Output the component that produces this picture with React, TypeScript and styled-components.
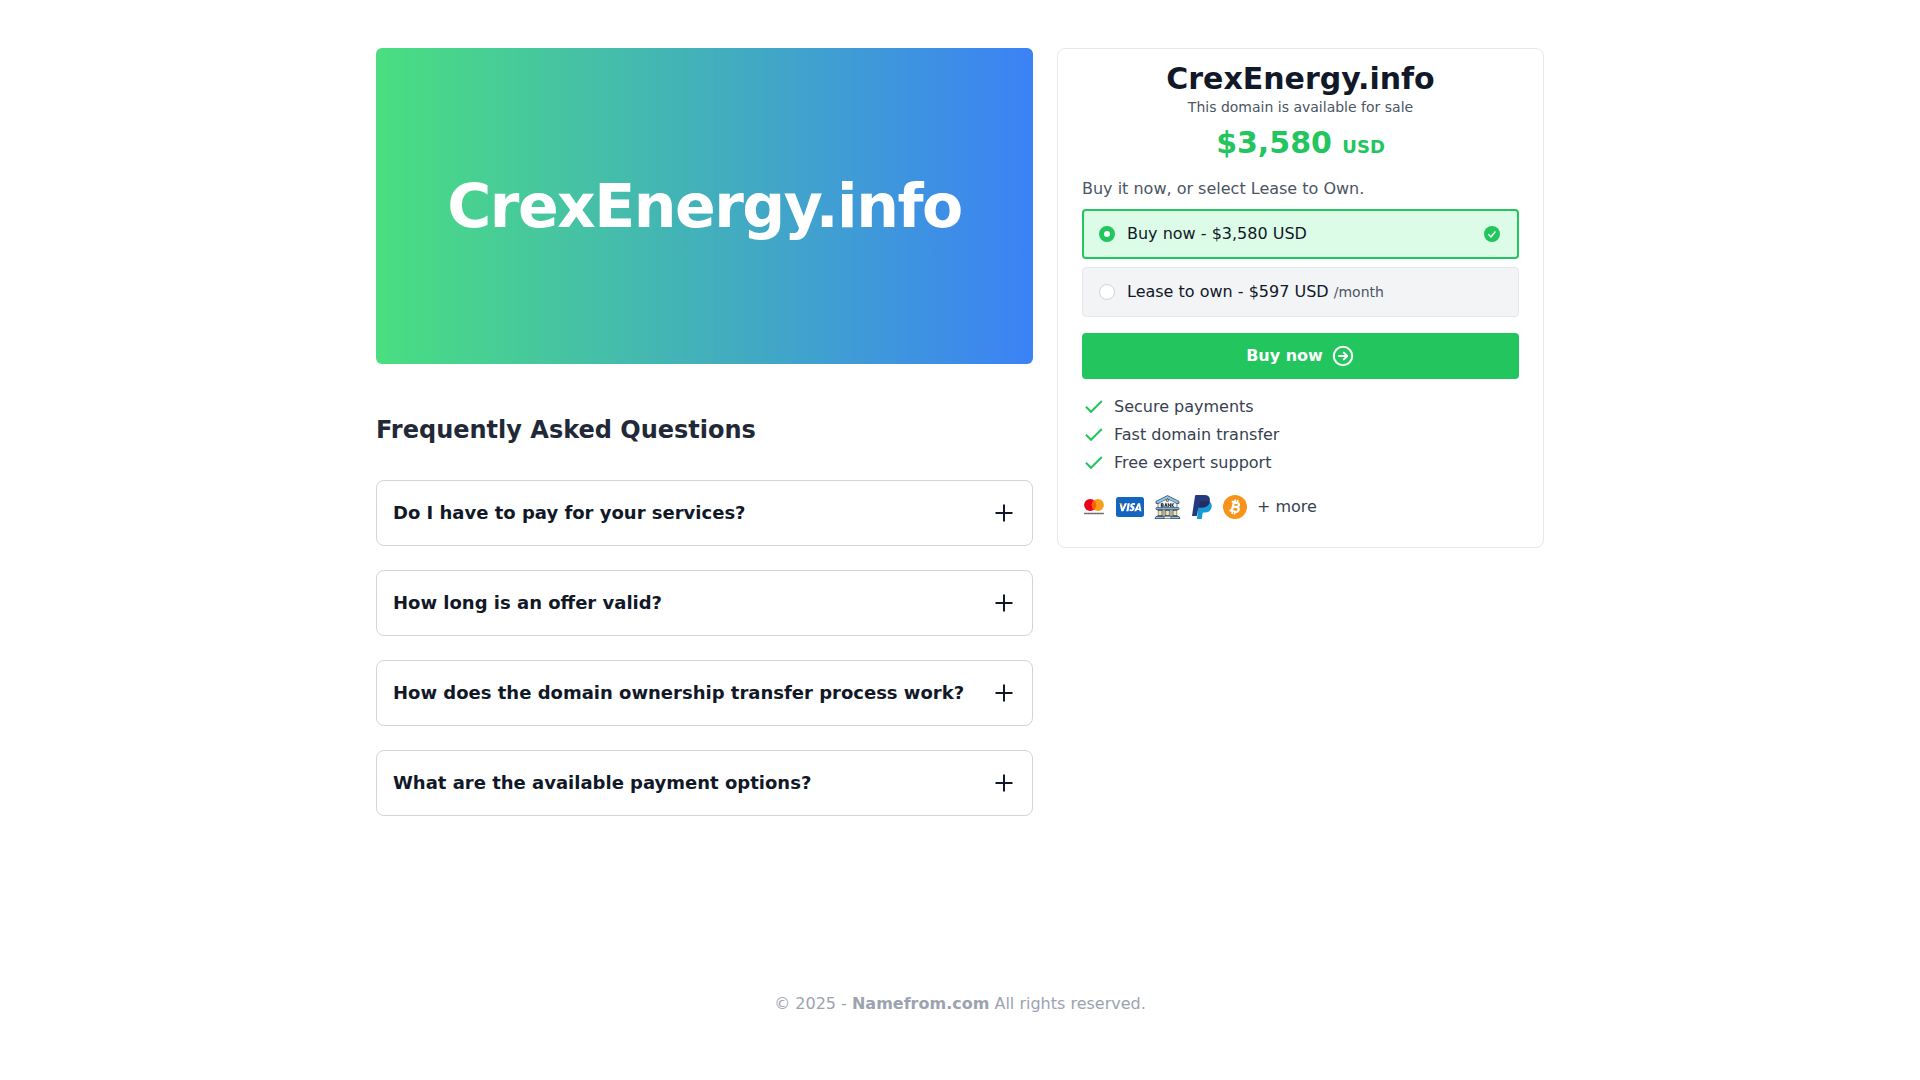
import { useState } from "react";
import styled, { createGlobalStyle } from "styled-components";

const GlobalStyle = createGlobalStyle`
  *, *::before, *::after { box-sizing: border-box; }
  body {
    margin: 0;
    background: #fff;
    color: #111827;
    font: 16px/24px "DejaVu Sans", sans-serif;
  }
  h1, h2, h3, p, ul, fieldset { margin: 0; padding: 0; border: 0; }
  ul { list-style: none; }
  button { font: inherit; color: inherit; cursor: pointer; }
`;

const Page = styled.div`
  max-width: 1216px;
  margin: 0 auto;
  padding: 48px 24px;
`;

const Columns = styled.main`
  display: grid;
  grid-template-columns: minmax(0, 657fr) minmax(0, 487fr);
  gap: 24px;
  align-items: start;

  @media (max-width: 900px) {
    grid-template-columns: minmax(0, 1fr);
  }
`;

const Hero = styled.div`
  display: flex;
  align-items: center;
  justify-content: center;
  min-height: 316px;
  border-radius: 6px;
  background: linear-gradient(to right, #4ade80, #3b82f6);
`;

const HeroTitle = styled.h1`
  color: #fff;
  font-size: 60px;
  line-height: 60px;
  font-weight: 700;
  letter-spacing: -0.025em;
`;

const FaqTitle = styled.h2`
  margin: 50px 0 34px;
  color: #1f2937;
  font-size: 24px;
  line-height: 32px;
  font-weight: 700;
`;

const FaqList = styled.div`
  display: grid;
  gap: 24px;
`;

const FaqItem = styled.div`
  border: 1px solid #d1d5db;
  border-radius: 8px;
`;

const FaqButton = styled.button`
  display: flex;
  align-items: center;
  justify-content: space-between;
  width: 100%;
  padding: 16px;
  border: 0;
  background: none;
  color: #111827;
  font-size: 18px;
  line-height: 32px;
  font-weight: 600;
  text-align: left;
`;

const Answer = styled.p`
  padding: 0 16px 16px;
  color: #4b5563;
`;

const Card = styled.section`
  padding: 12px 24px 28px;
  border: 1px solid #e5e7eb;
  border-radius: 8px;
`;

const CardHead = styled.header`
  display: flex;
  flex-direction: column;
  align-items: center;
`;

const Domain = styled.h2`
  font-size: 30px;
  line-height: 36px;
  font-weight: 700;
`;

const Tagline = styled.p`
  color: #4b5563;
  font-size: 14px;
  line-height: 20px;
`;

const Price = styled.p`
  margin-top: 8px;
  color: #22c55e;
  font-size: 30px;
  line-height: 36px;
  font-weight: 700;
`;

const Currency = styled.span`
  font-size: 18px;
  font-weight: 600;
`;

const Options = styled.fieldset`
  display: grid;
  gap: 8px;
  min-width: 0;
  margin-top: 12px;
`;

const Prompt = styled.legend`
  padding: 0 0 8px;
  color: #4b5563;
`;

const Option = styled.label<{ $selected: boolean }>`
  display: flex;
  align-items: center;
  gap: 12px;
  min-height: 50px;
  padding: 0 ${(p) => (p.$selected ? 16 : 17)}px 0 ${(p) => (p.$selected ? 15 : 16)}px;
  border: ${(p) => (p.$selected ? "2px solid #22c55e" : "1px solid #e5e7eb")};
  border-radius: 4px;
  background: ${(p) => (p.$selected ? "#dcfce7" : "#f3f4f6")};
  cursor: pointer;
`;

const Radio = styled.input`
  appearance: none;
  flex: none;
  width: 16px;
  height: 16px;
  margin: 0;
  border: 1px solid #d1d5db;
  border-radius: 50%;
  background: #fff;

  &:checked {
    border: 5px solid #22c55e;
  }
`;

const OptionText = styled.span`
  flex: 1;
`;

const Period = styled.small`
  color: #4b5563;
  font-size: 14px;
`;

const BuyButton = styled.button`
  display: flex;
  align-items: center;
  justify-content: center;
  gap: 8px;
  width: 100%;
  margin-top: 16px;
  padding: 11px 16px;
  border: 0;
  border-radius: 4px;
  background: #22c55e;
  color: #fff;
  font-weight: 600;
`;

const Perks = styled.ul`
  display: grid;
  gap: 4px;
  margin-top: 16px;
  color: #374151;
`;

const Perk = styled.li`
  display: flex;
  align-items: center;
  gap: 8px;
`;

const Payments = styled.div`
  display: flex;
  align-items: center;
  gap: 10px;
  margin-top: 20px;
  color: #374151;
`;

const Brand = styled.svg`
  display: block;
  flex: none;
`;

const Footer = styled.footer`
  padding-top: 176px;
  color: #9ca3af;
  text-align: center;
`;

const FooterLink = styled.a`
  color: inherit;
  font-weight: 700;
  text-decoration: none;
`;

const PlusIcon = () => (
  <svg width="24" height="24" viewBox="0 0 24 24" fill="none" stroke="currentColor" strokeWidth="2" aria-hidden="true">
    <path d="M12 3.5v17M3.5 12h17" />
  </svg>
);

const SelectedIcon = () => (
  <svg width="18" height="18" viewBox="0 0 24 24" aria-hidden="true">
    <circle cx="12" cy="12" r="10.7" fill="#22c55e" />
    <path d="M7.300 12.400l3.300 3.500 5.900-7.200" fill="none" stroke="#fff" strokeWidth="2" />
  </svg>
);

const ArrowIcon = () => (
  <svg width="24" height="24" viewBox="0 0 24 24" fill="none" stroke="currentColor" strokeWidth="2" strokeLinecap="round" strokeLinejoin="round" aria-hidden="true">
    <circle cx="12" cy="12" r="9.2" />
    <path d="M8 12h8M12.800 8.600l3.400 3.400-3.400 3.400" />
  </svg>
);

const CheckIcon = () => (
  <svg width="24" height="24" viewBox="0 0 24 24" fill="none" stroke="#22c55e" strokeWidth="2" aria-hidden="true">
    <path d="M4 11.800l5 5L19.800 6" />
  </svg>
);

const Mastercard = () => (
  <Brand width="24" height="24" viewBox="0 0 24 24" role="img" aria-label="Mastercard">
    <circle cx="8.2" cy="10" r="6.1" fill="#eb001b" />
    <circle cx="15.8" cy="10" r="6.1" fill="#f79e1b" />
    <path d="M12 5.2a6.1 6.1 0 0 1 0 9.6 6.1 6.1 0 0 1 0-9.6z" fill="#ff5f00" />
    <path d="M2.3 18.500h19.400" stroke="#444" strokeWidth="1.500" strokeDasharray="1.500 .4 .8 .3" />
  </Brand>
);

const Visa = () => (
  <Brand width="28" height="20" viewBox="0 0 28 20" role="img" aria-label="Visa">
    <rect width="28" height="20" rx="2.500" fill="#1565c0" />
    <g fill="#fff">
      <path d="M5.2 6.2l1.6 4.7 2-4.7h2.3l-3.7 8H5.3L3.9 7.7z" />
      <path d="M11.7 6.2h2.2l-1.4 8h-2.2z" />
      <path d="M19.2 6.4l-.4 1.8c-1-.5-2.4-.6-2.4.1 0 .9 2.2 1 2.2 3 0 2.7-3.2 3.4-5.2 2.5l.4-1.8c1.1.6 2.6.6 2.6-.2 0-.9-2.2-1-2.2-2.9 0-2.6 2.9-3.3 5-2.500z" />
      <path d="M22 6.2h2l1.4 8h-1.9l-.2-1.2h-2.500l-.5 1.2h-2.100zm.9 2.700l-1.100 2.600H23z" />
    </g>
    <path d="M3 6.2h2.1c.6 0 .9.3 1 .8l.7 3.4C6 8.600 4.800 7.300 3 6.500z" fill="#ffc107" />
  </Brand>
);

const Bank = () => (
  <Brand width="27" height="24" viewBox="-1 0 27 24" role="img" aria-label="Bank transfer">
    <path d="M3 7.500h19V13H3z" fill="#f4f7f9" stroke="#1d3144" strokeWidth=".6" />
    <path d="M12.500.600L1 6.400v2h2.500l9-4.500 9 4.500H24v-2z" fill="#8ec5f0" stroke="#1d3144" strokeWidth=".7" />
    <path d="M4 8.300l8.500-4.100L21 8.300z" fill="#eef3f6" />
    <circle cx="12.500" cy="5.300" r="1.300" fill="#f6b84a" stroke="#1d3144" strokeWidth=".6" />
    <path d="M6.300 11.900V8.400h1.500l.5.800-.5.900H6.300h1.600l.6.800-.6 1H6.300M9.700 12l1.200-3.700 1.300 3.700m-2-1.200h1.600M13.300 12V8.500l2.300 3.300V8.300M17 8.300V12m2.200-3.700L17 10.200l2.300 1.800" fill="none" stroke="#111c27" strokeWidth=".9" />
    <path d="M1 12.700h23v1.800H1z" fill="#8ec5f0" stroke="#1d3144" strokeWidth=".6" />
    <path d="M3 15h19v6H3z" fill="#a9adb5" />
    <path d="M3.200 15h3.600v6H3.200zM10.700 15h3.600v6h-3.600zM18.200 15h3.600v6h-3.600z" fill="#fbe3a0" stroke="#4a4a48" strokeWidth=".5" />
    <path d="M2.500 15.300h5M10 15.300h5M17.500 15.300h5M2.500 20.700h5M10 20.700h5M17.500 20.700h5" stroke="#1d3144" strokeWidth=".7" />
    <path d="M1 21.500h8.500v2H0zM15.500 21.500H24l1 2h-9.500z" fill="#8ec5f0" stroke="#1d3144" strokeWidth=".7" />
    <path d="M9 21.200h7v2.500H9z" fill="#e6edf1" stroke="#1d3144" strokeWidth=".6" />
  </Brand>
);

const PayPal = () => (
  <Brand width="22" height="24" viewBox="-1 0 22 24" role="img" aria-label="PayPal">
    <path d="M7 6.500h10c2.500 1.200 3.200 3.500 2.500 6.200-.8 3.300-3.200 4.800-6.600 4.800h-1.200c-.6 0-1 .4-1.100 1L9.800 24H4.900z" fill="#179bd7" />
    <path d="M4.200 0h8.300c3.700 0 5.700 2 5.400 5.300-.5 4.600-3.500 7.100-8 7.100H7.500c-.7 0-1.100.4-1.200 1L4.800 21H0L3 1.100C3.100.4 3.600 0 4.200 0z" fill="#253b80" />
    <path d="M7.900 6.900c.1-.5.400-.9 1-.9h6.300c1 0 1.900.1 2.600.4-.8 4-3.700 6-7.900 6H7.100z" fill="#222d65" />
  </Brand>
);

const Bitcoin = () => (
  <Brand width="24" height="24" viewBox="0 0 24 24" role="img" aria-label="Bitcoin">
    <circle cx="12" cy="12" r="12" fill="#f7931a" />
    <g transform="rotate(14 12 12)" fill="none" stroke="#fff">
      <path d="M9.800 7.500v9M7.500 7.500h5.600c3 0 3 4.200 0 4.200H9.800h3.900c3.400 0 3.400 4.800 0 4.800H7.500" strokeWidth="2.200" />
      <path d="M10.700 4.500v3M13.200 4.500v3M10.700 16.500v3M13.200 16.500v3" strokeWidth="1.600" />
    </g>
  </Brand>
);

const faqs = [
  { q: "Do I have to pay for your services?", a: "No, buyers pay only the listed price of the domain." },
  { q: "How long is an offer valid?", a: "An offer is valid while the domain is listed for sale." },
  { q: "How does the domain ownership transfer process work?", a: "The domain is moved to your account once payment is received." },
  { q: "What are the available payment options?", a: "Card, bank transfer, PayPal, Bitcoin and more." },
];

const perks = ["Secure payments", "Fast domain transfer", "Free expert support"];

export default function App() {
  const [plan, setPlan] = useState("buy");
  const [open, setOpen] = useState<number | null>(null);

  return (
    <>
      <GlobalStyle />
      <Page>
        <Columns>
          <div>
            <Hero>
              <HeroTitle>CrexEnergy.info</HeroTitle>
            </Hero>
            <FaqTitle>Frequently Asked Questions</FaqTitle>
            <FaqList>
              {faqs.map((f, i) => (
                <FaqItem key={f.q}>
                  <FaqButton
                    type="button"
                    aria-expanded={open === i}
                    onClick={() => setOpen(open === i ? null : i)}
                  >
                    {f.q}
                    <PlusIcon />
                  </FaqButton>
                  {open === i && <Answer>{f.a}</Answer>}
                </FaqItem>
              ))}
            </FaqList>
          </div>

          <Card>
            <CardHead>
              <Domain>CrexEnergy.info</Domain>
              <Tagline>This domain is available for sale</Tagline>
              <Price>
                $3,580 <Currency>USD</Currency>
              </Price>
            </CardHead>
            <Options>
              <Prompt>Buy it now, or select Lease to Own.</Prompt>
              <Option $selected={plan === "buy"}>
                <Radio type="radio" name="plan" checked={plan === "buy"} onChange={() => setPlan("buy")} />
                <OptionText>Buy now - $3,580 USD</OptionText>
                {plan === "buy" && <SelectedIcon />}
              </Option>
              <Option $selected={plan === "lease"}>
                <Radio type="radio" name="plan" checked={plan === "lease"} onChange={() => setPlan("lease")} />
                <OptionText>
                  Lease to own - $597 USD <Period>/month</Period>
                </OptionText>
                {plan === "lease" && <SelectedIcon />}
              </Option>
            </Options>
            <BuyButton type="button">
              Buy now
              <ArrowIcon />
            </BuyButton>
            <Perks>
              {perks.map((p) => (
                <Perk key={p}>
                  <CheckIcon />
                  {p}
                </Perk>
              ))}
            </Perks>
            <Payments>
              <Mastercard />
              <Visa />
              <Bank />
              <PayPal />
              <Bitcoin />
              <span>+ more</span>
            </Payments>
          </Card>
        </Columns>
        <Footer>
          © 2025 - <FooterLink href="#">Namefrom.com</FooterLink> All rights reserved.
        </Footer>
      </Page>
    </>
  );
}
